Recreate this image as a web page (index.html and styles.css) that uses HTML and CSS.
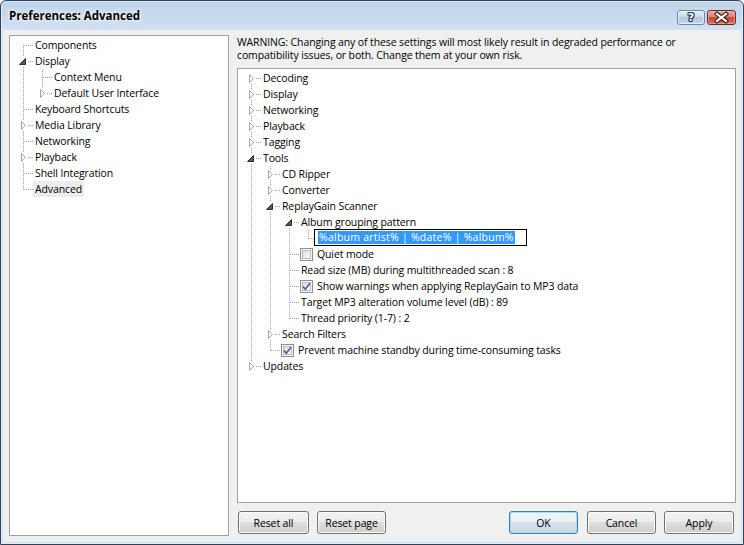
FILE: index.html
```html
<!DOCTYPE html>
<html>
<head>
<meta charset="utf-8">
<title>Preferences: Advanced</title>
<link rel="stylesheet" href="styles.css">
</head>
<body>
<svg class="defs" width="0" height="0" aria-hidden="true">
  <symbol id="tri-c" viewBox="0 0 19 16">
    <rect x="5" y="3" width="9" height="11" fill="#fff"/>
    <path d="M7.5 4.5 L11.5 8.5 L7.5 12.5 Z" fill="#fff" stroke="#a6a6a6"/>
  </symbol>
  <symbol id="tri-e" viewBox="0 0 19 16">
    <rect x="5" y="3" width="9" height="11" fill="#fff"/>
    <path d="M11.5 5.5 V11.5 H5.5 Z" fill="#595959" stroke="#2e2e2e" stroke-linejoin="miter"/>
  </symbol>
  <symbol id="check" viewBox="0 0 11 11">
    <path d="M2 5.5 L4.3 8.3 L9 2.3" fill="none" stroke="#4a5f95" stroke-width="1.6"/>
  </symbol>
</svg>

<div class="window">
  <div class="titlebar">
    <span class="title">Preferences: Advanced</span>
    <div class="caption-buttons">
      <div class="cap help"><span>?</span></div>
      <div class="cap close">
        <svg width="27" height="13" viewBox="0 0 27 13">
          <path d="M9 3 L18 10 M18 3 L9 10" stroke="#3b1a16" stroke-width="4.2" stroke-linecap="square"/>
          <path d="M9 3 L18 10 M18 3 L9 10" stroke="#fff" stroke-width="2.2" stroke-linecap="square"/>
        </svg>
      </div>
    </div>
  </div>

  <div class="client">
    <div class="tree nav">
      <div class="row"><span class="c first"></span><span class="label">Components</span></div>
      <div class="row"><span class="c"><svg class="exp"><use href="#tri-e"/></svg></span><span class="label">Display</span></div>
      <div class="row"><span class="g v"></span><span class="c"></span><span class="label">Context Menu</span></div>
      <div class="row"><span class="g v"></span><span class="c end"><svg class="exp"><use href="#tri-c"/></svg></span><span class="label">Default User Interface</span></div>
      <div class="row"><span class="c"></span><span class="label">Keyboard Shortcuts</span></div>
      <div class="row"><span class="c"><svg class="exp"><use href="#tri-c"/></svg></span><span class="label">Media Library</span></div>
      <div class="row"><span class="c"></span><span class="label">Networking</span></div>
      <div class="row"><span class="c"><svg class="exp"><use href="#tri-c"/></svg></span><span class="label">Playback</span></div>
      <div class="row"><span class="c"></span><span class="label">Shell Integration</span></div>
      <div class="row"><span class="c end"></span><span class="label selected">Advanced</span></div>
    </div>

    <div class="main">
      <p class="warning">WARNING: Changing any of these settings will most likely result in degraded performance or compatibility issues, or both. Change them at your own risk.</p>

      <div class="tree adv">
        <div class="row"><span class="c first"><svg class="exp"><use href="#tri-c"/></svg></span><span class="label">Decoding</span></div>
        <div class="row"><span class="c"><svg class="exp"><use href="#tri-c"/></svg></span><span class="label">Display</span></div>
        <div class="row"><span class="c"><svg class="exp"><use href="#tri-c"/></svg></span><span class="label">Networking</span></div>
        <div class="row"><span class="c"><svg class="exp"><use href="#tri-c"/></svg></span><span class="label">Playback</span></div>
        <div class="row"><span class="c"><svg class="exp"><use href="#tri-c"/></svg></span><span class="label">Tagging</span></div>
        <div class="row"><span class="c"><svg class="exp"><use href="#tri-e"/></svg></span><span class="label">Tools</span></div>
        <div class="row"><span class="g v"></span><span class="c"><svg class="exp"><use href="#tri-c"/></svg></span><span class="label">CD Ripper</span></div>
        <div class="row"><span class="g v"></span><span class="c"><svg class="exp"><use href="#tri-c"/></svg></span><span class="label">Converter</span></div>
        <div class="row"><span class="g v"></span><span class="c"><svg class="exp"><use href="#tri-e"/></svg></span><span class="label">ReplayGain Scanner</span></div>
        <div class="row"><span class="g v"></span><span class="g v"></span><span class="c"><svg class="exp"><use href="#tri-e"/></svg></span><span class="label">Album grouping pattern</span></div>
        <div class="row"><span class="g v"></span><span class="g v"></span><span class="g v"></span><span class="c end"></span><span class="edit"><span class="sel">%album artist% | %date% | %album%</span></span></div>
        <div class="row"><span class="g v"></span><span class="g v"></span><span class="c"></span><span class="cb"></span><span class="label">Quiet mode</span></div>
        <div class="row"><span class="g v"></span><span class="g v"></span><span class="c"></span><span class="label">Read size (MB) during multithreaded scan : 8</span></div>
        <div class="row"><span class="g v"></span><span class="g v"></span><span class="c"></span><span class="cb"><svg width="11" height="11"><use href="#check"/></svg></span><span class="label">Show warnings when applying ReplayGain to MP3 data</span></div>
        <div class="row"><span class="g v"></span><span class="g v"></span><span class="c"></span><span class="label">Target MP3 alteration volume level (dB) : 89</span></div>
        <div class="row"><span class="g v"></span><span class="g v"></span><span class="c end"></span><span class="label">Thread priority (1-7) : 2</span></div>
        <div class="row"><span class="g v"></span><span class="c"><svg class="exp"><use href="#tri-c"/></svg></span><span class="label">Search Filters</span></div>
        <div class="row"><span class="g v"></span><span class="c end"></span><span class="cb"><svg width="11" height="11"><use href="#check"/></svg></span><span class="label">Prevent machine standby during time-consuming tasks</span></div>
        <div class="row"><span class="c end"><svg class="exp"><use href="#tri-c"/></svg></span><span class="label">Updates</span></div>
      </div>

      <div class="buttons">
        <button class="btn w-reset-all">Reset all</button>
        <button class="btn w-reset-page">Reset page</button>
        <span class="spacer"></span>
        <button class="btn default w-ok">OK</button>
        <button class="btn w-cancel">Cancel</button>
        <button class="btn w-apply">Apply</button>
      </div>
    </div>
  </div>
</div>
</body>
</html>
```

FILE: styles.css
```css
* { box-sizing: border-box; }

html, body {
  margin: 0;
  padding: 0;
}

body {
  width: 744px;
  height: 545px;
  overflow: hidden;
  background: #fff;
  font-family: "Open Sans", "Noto Sans", "Liberation Sans", sans-serif;
  font-size: 10.5px;
  letter-spacing: -0.12px;
  color: #000;
}

.defs {
  display: block;
  width: 0;
  height: 0;
  overflow: hidden;
}

/* ---------- window frame ---------- */
.window {
  width: 744px;
  height: 545px;
  border: 1px solid #2f4258;
  border-radius: 6px 6px 0 0;
  background: linear-gradient(to bottom, #bfd4eb 0, #c9dbef 20px, #d3e2f2 30px, #cfe0f2 100%);
  padding: 0 2px 2px 2px;
  display: flex;
  flex-direction: column;
  box-shadow: inset 0 0 0 1px rgba(255, 255, 255, 0.45);
}

.titlebar {
  height: 29px;
  flex: none;
  display: flex;
  align-items: flex-start;
  padding-left: 6px;
}

.title {
  margin-top: 7px;
  font-weight: 700;
  font-size: 11.5px;
  letter-spacing: 0;
  color: #000;
  text-shadow: 0 0 6px rgba(255, 255, 255, 0.95), 0 0 3px rgba(255, 255, 255, 0.9);
}

.caption-buttons {
  margin-left: auto;
  margin-right: 5px;
  margin-top: 9px;
  display: flex;
  gap: 2px;
}

.cap {
  height: 15px;
  border-radius: 3px;
  display: flex;
  align-items: center;
  justify-content: center;
}

.cap.help {
  width: 28px;
  border: 1px solid #6f88a6;
  background: linear-gradient(to bottom, #e0eaf5 0, #c9d9ec 50%, #b1c8e2 50%, #c3d7ee 100%);
  box-shadow: inset 0 0 0 1px rgba(255, 255, 255, 0.55);
}

.cap.help span {
  font-family: "DejaVu Sans", sans-serif;
  font-weight: 700;
  font-size: 11px;
  letter-spacing: 0;
  line-height: 13px;
  color: #fff;
  text-shadow: 1px 0 0 #2c3c52, -1px 0 0 #2c3c52, 0 1px 0 #2c3c52, 0 -1px 0 #2c3c52, 1px 1px 0 #2c3c52, -1px -1px 0 #2c3c52, 1px -1px 0 #2c3c52, -1px 1px 0 #2c3c52;
}

.cap.close {
  width: 29px;
  border: 1px solid #6b2a23;
  background: linear-gradient(to bottom, #e8aaa1 0, #d8806f 50%, #c24a39 50%, #d2735f 100%);
  box-shadow: inset 0 0 0 1px rgba(255, 210, 200, 0.45);
}

.cap.close svg { display: block; }

/* ---------- client ---------- */
.client {
  flex: 1;
  background: #f0f0f0;
  display: flex;
  gap: 8px;
  padding: 5px 5px 6px 6px;
}

.tree {
  background: #fff;
  border: 1px solid #a0a0a0;
  padding: 1px 0 0 4px;
  overflow: hidden;
}

.nav {
  width: 220px;
  height: 501px;
  flex: none;
}

.main {
  width: 499px;
  flex: none;
  display: flex;
  flex-direction: column;
}

.warning {
  margin: 0 0 7px 0;
  line-height: 13px;
  height: 26px;
  padding-top: 1px;
  box-sizing: content-box;
  height: 25px;
}

.adv {
  height: 435px;
  flex: none;
}

/* ---------- tree rows ---------- */
.row {
  display: flex;
  align-items: center;
  height: 16px;
  white-space: nowrap;
}

.g, .c {
  width: 19px;
  height: 16px;
  flex: none;
}

.g.v {
  background-image: repeating-linear-gradient(to bottom, #a0a0a0 0 1px, transparent 1px 2px);
  background-repeat: no-repeat;
  background-position: 9px 0;
  background-size: 1px 16px;
}

.c {
  background-image:
    repeating-linear-gradient(to right, #a0a0a0 0 1px, transparent 1px 2px),
    repeating-linear-gradient(to bottom, #a0a0a0 0 1px, transparent 1px 2px);
  background-repeat: no-repeat, no-repeat;
  background-position: 10px 8px, 9px 0;
  background-size: 9px 1px, 1px 16px;
}

.c.end {
  background-size: 9px 1px, 1px 9px;
}

.c.first {
  background-position: 10px 8px, 9px 8px;
  background-size: 9px 1px, 1px 8px;
}

.exp {
  display: block;
  width: 19px;
  height: 16px;
}

.label {
  padding: 0 2px;
  height: 16px;
  line-height: 16px;
}

.label.selected {
  background: #ececec;
}

.cb {
  width: 13px;
  height: 13px;
  flex: none;
  margin: 0 2px 0 1px;
  border: 1px solid #8e8f8f;
  background: linear-gradient(135deg, #d2d5d9 0%, #eceef0 55%, #fbfbfb 100%);
  box-shadow: inset 0 0 0 1px #f6f6f6, inset 0 0 0 2px #b9bcc0;
  display: flex;
  align-items: center;
  justify-content: center;
}

.cb svg { display: block; }

.edit {
  flex: none;
  width: 213px;
  height: 17px;
  margin: -1px 0 0 -4px;
  border: 1px solid #000;
  background: #fff;
  display: flex;
  align-items: center;
  padding-left: 3px;
}

.edit .sel {
  background: #3399ff;
  color: #fff;
  line-height: 13px;
  height: 13px;
  padding: 0 1px;
  letter-spacing: 0.25px;
}

/* ---------- buttons ---------- */
.buttons {
  margin-top: 8px;
  display: flex;
  height: 23px;
  padding-left: 1px;
}

.spacer { flex: 1; }

.btn {
  font-family: inherit;
  font-size: 10.5px;
  letter-spacing: -0.12px;
  color: #000;
  height: 23px;
  padding: 0;
  border: 1px solid #707070;
  border-radius: 3px;
  background: linear-gradient(to bottom, #f2f2f2 0, #ebebeb 50%, #dddddd 50%, #cfcfcf 100%);
  box-shadow: inset 0 0 0 1px #fbfbfb;
}

.btn.default {
  border-color: #3c7fb1;
  box-shadow: inset 0 0 0 1px #a6dcf5;
  background: linear-gradient(to bottom, #f0f6f9 0, #e7eff4 50%, #d6e2ea 50%, #c8d7e2 100%);
}

.w-reset-all { width: 71px; margin-right: 8px; }
.w-reset-page { width: 69px; }
.w-ok { width: 69px; margin-right: 9px; }
.w-cancel { width: 69px; margin-right: 8px; }
.w-apply { width: 70px; margin-right: 2px; }
```
